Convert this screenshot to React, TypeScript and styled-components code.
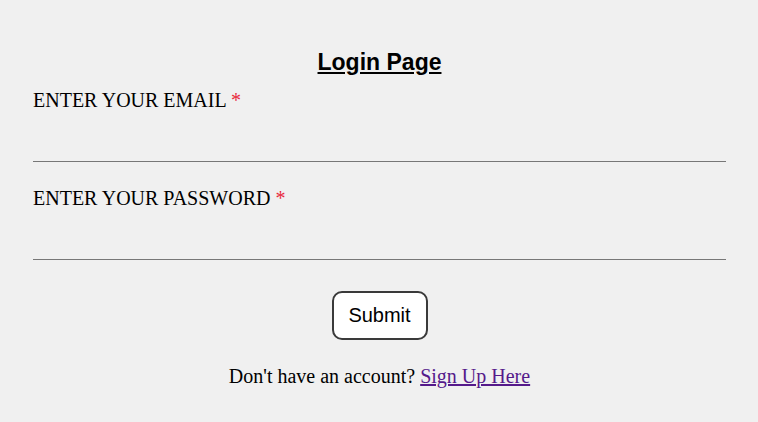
import React from "react";
import styled, { createGlobalStyle } from "styled-components";

const Global = createGlobalStyle`
  html, body { margin: 0; padding: 0; background: #f0f0f0; }
  body { font-family: "Liberation Serif", "Times New Roman", serif; }
`;

const Page = styled.div`
  padding: 49px 32px 0 33px;
  display: flex;
  flex-direction: column;
`;

const Title = styled.h2`
  margin: 0 0 13px;
  text-align: center;
  font-family: "Liberation Sans", Arial, sans-serif;
  font-size: 23px;
  font-weight: bold;
  text-decoration: underline;
  color: #000;
`;

const Field = styled.div`
  display: flex;
  flex-direction: column;
  margin-bottom: 25px;
`;

const Label = styled.label`
  font-size: 20px;
  color: #000;
`;

const Star = styled.span`
  color: #e8283c;
`;

const Input = styled.input`
  margin-top: 13px;
  height: 36px;
  border: none;
  border-bottom: 1px solid #777;
  background: transparent;
  outline: none;
  padding: 0;
  font-size: 18px;
`;

const Actions = styled.div`
  display: flex;
  justify-content: center;
  margin-top: 6px;
`;

const Button = styled.button`
  width: 96px;
  height: 49px;
  border: 2px solid #3a3a3a;
  border-radius: 10px;
  background: #fff;
  font-family: "Liberation Sans", Arial, sans-serif;
  font-size: 20px;
  color: #000;
`;

const Footer = styled.p`
  margin: 25px 0 0;
  text-align: center;
  font-size: 20px;
  color: #000;
`;

const Link = styled.a`
  color: #551a8b;
  text-decoration: underline;
`;

export default function App() {
  return (
    <>
      <Global />
      <Page>
        <Title>Login Page</Title>
        <Field>
          <Label>
            ENTER YOUR EMAIL <Star>*</Star>
          </Label>
          <Input type="email" />
        </Field>
        <Field>
          <Label>
            ENTER YOUR PASSWORD <Star>*</Star>
          </Label>
          <Input type="password" />
        </Field>
        <Actions>
          <Button>Submit</Button>
        </Actions>
        <Footer>
          Don't have an account? <Link href="#">Sign Up Here</Link>
        </Footer>
      </Page>
    </>
  );
}
